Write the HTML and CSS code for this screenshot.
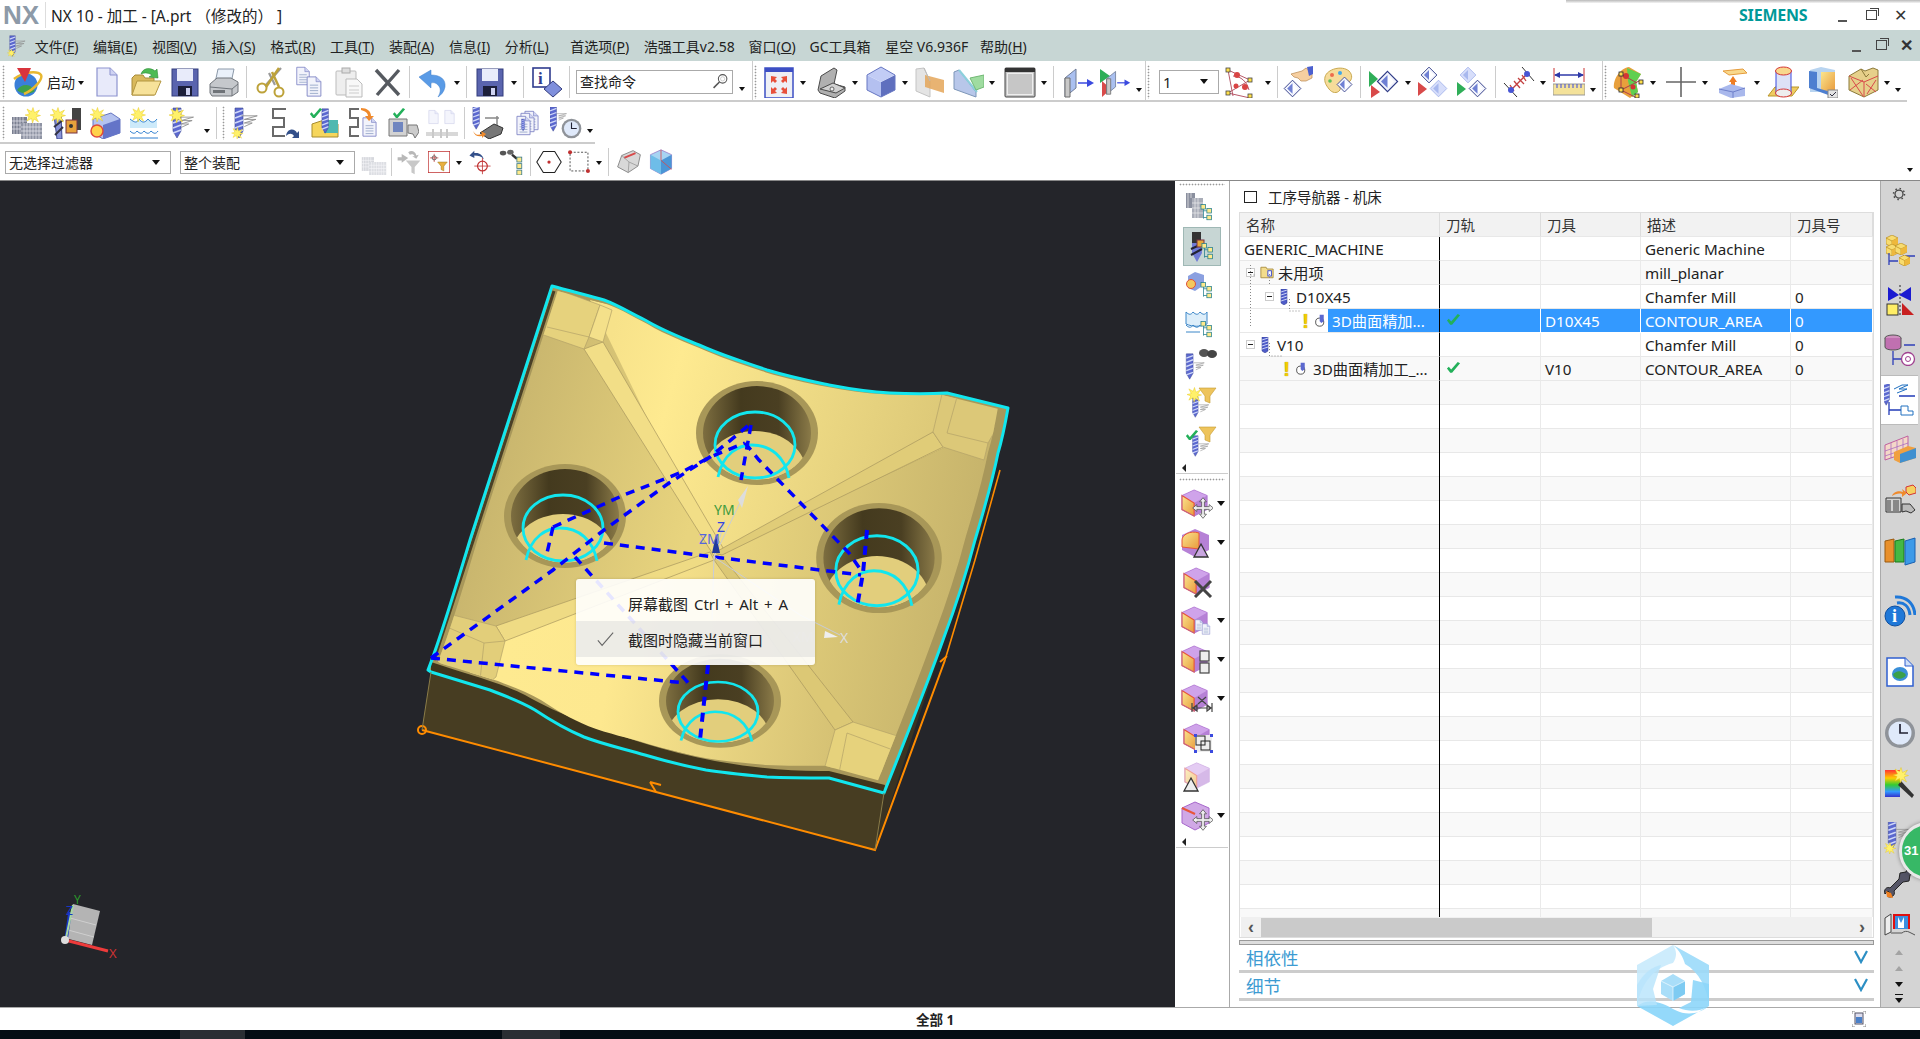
FILE: index.html
```html
<!DOCTYPE html>
<html lang="zh"><head><meta charset="utf-8"><title>NX 10</title><link rel="stylesheet" href="styles.css"></head>
<body>
<svg class="defs" aria-hidden="true"><defs>
<linearGradient id="gB" x1="0" y1="0" x2="1" y2="1"><stop offset="0" stop-color="#d5dbf7"/><stop offset="1" stop-color="#6d7fd6"/></linearGradient>
<linearGradient id="gG" x1="0" y1="0" x2="1" y2="1"><stop offset="0" stop-color="#fbe58e"/><stop offset="1" stop-color="#e89a3c"/></linearGradient>
<linearGradient id="gR" x1="0" y1="0" x2="0" y2="1"><stop offset="0" stop-color="#f33"/><stop offset=".3" stop-color="#fc0"/><stop offset=".55" stop-color="#3c3"/><stop offset=".8" stop-color="#39f"/><stop offset="1" stop-color="#33c"/></linearGradient>
<symbol id="mill" viewBox="0 0 32 32"><path d="M11 1h8v23l-4 7-4-7z" fill="#5b68cf" stroke="#3c478f" stroke-width=".6"/><path d="M11 6l8-3M11 11l8-3M11 16l8-3M11 21l8-3M11 26l8-3" stroke="#cfd7f8" stroke-width="1.6"/></symbol>
<symbol id="tool" viewBox="0 0 8 16"><path d="M1 0h6v14l-3 2-3-2z" fill="#4f5cc8" stroke="#2f3a8f" stroke-width=".5"/><path d="M1 3l6-2M1 6l6-2M1 9l6-2M1 12l6-2" stroke="#d5dcf9" stroke-width=".9"/></symbol>
<symbol id="flat" viewBox="0 0 32 32"><path d="M2 6h22L6 11h16L6 16h11L6 21" fill="none" stroke="#8b8b8b" stroke-width="1.2"/></symbol>
<symbol id="star" viewBox="0 0 32 32"><path d="M16 1l3 10 10-5-6 9 8 2-9 3 5 10-9-6-3 8-2-9-9 5 4-9-8-3 9-2-5-10 9 5z" fill="#fff16a" stroke="#e3c100" stroke-width=".8"/></symbol>
<symbol id="tybox" viewBox="0 0 32 32"><path d="M8 4v22M8 12h6M8 24h6" fill="none" stroke="#1a7a8a" stroke-width="1.3"/><g fill="#ffe98a" stroke="#1a7a8a" stroke-width="1.3"><rect x="3.500" y="1" width="8" height="8"/><rect x="14" y="8" width="8" height="8"/><rect x="14" y="20" width="8" height="8"/></g></symbol>
<symbol id="doc" viewBox="0 0 32 32"><path d="M6 2h13l7 7v21H6z" fill="#e8eafa" stroke="#8d93cf" stroke-width="1.2"/><path d="M19 2v7h7" fill="#cfd3f2" stroke="#8d93cf"/></symbol>
<symbol id="docl" viewBox="0 0 32 32"><path d="M6 2h13l7 7v21H6z" fill="#f2f3fb" stroke="#7d83c4" stroke-width="1.3"/><path d="M19 2v7h7" fill="#cfd3f2" stroke="#7d83c4"/><path d="M10 14h12M10 18h12M10 22h12M10 26h12" stroke="#7a90b8"/></symbol>
<symbol id="open" viewBox="0 0 32 32"><path d="M2 29V12l3-3h8l2 3h9v17z" fill="#d9b95c" stroke="#a88b3a"/><path d="M2 29l5-14h24l-6 14z" fill="#f7e29a" stroke="#b39640"/><path d="M11 8c2-6 9-7 14-3l2-2 1 9-9-1 3-2c-3-2-7-3-11-1z" fill="#4dbb54" stroke="#2d8c38" stroke-width=".6"/></symbol>
<symbol id="save" viewBox="0 0 32 32"><rect x="3" y="3" width="26" height="27" fill="#5a64ae" stroke="#333c7c"/><rect x="8" y="3" width="16" height="12" fill="#e8ebfa"/><rect x="9" y="20" width="14" height="10" fill="#1c1f3a"/><rect x="17" y="22" width="4" height="7" fill="#cfd3f2"/></symbol>
<symbol id="print" viewBox="0 0 32 32"><path d="M10 3h16l-3 14H7z" fill="#eaf1fa" stroke="#8b98a8"/><path d="M2 18l7-6h14l7 4v10l-6 4H4l-2-3z" fill="#c5c8cc" stroke="#70757b"/><path d="M2 21l22 2 6-5M24 23v7" fill="none" stroke="#70757b"/><path d="M5 24h12v3H5z" fill="#6f7378"/></symbol>
<symbol id="cut" viewBox="0 0 32 32"><path d="M27 2L11 20M15 7l6 12" stroke="#9a9a9a" stroke-width="2.2" fill="none"/><path d="M25 2L12 21" stroke="#bda23a" stroke-width="2.5"/><path d="M18 6l7 15" stroke="#bda23a" stroke-width="2.5"/><circle cx="8" cy="22" r="4.500" fill="none" stroke="#bda23a" stroke-width="2"/><circle cx="25" cy="26" r="4.500" fill="none" stroke="#bda23a" stroke-width="2"/></symbol>
<symbol id="copy" viewBox="0 0 32 32"><use href="#docl" x="0" y="-1" width="20" height="22"/><use href="#docl" x="10" y="9" width="22" height="23"/></symbol>
<symbol id="paste" viewBox="0 0 32 32"><rect x="4" y="5" width="20" height="24" rx="1" fill="#eee" stroke="#bbb"/><rect x="10" y="2" width="8" height="5" fill="#ddd" stroke="#aaa"/><path d="M14 13h11l5 5v13H14z" fill="#f8f8f8" stroke="#bbb"/><path d="M17 20h10M17 24h10M17 27h10" stroke="#ccc"/></symbol>
<symbol id="x" viewBox="0 0 32 32"><path d="M5 4l23 25M28 4L6 29" stroke="#565a60" stroke-width="3.400" fill="none"/></symbol>
<symbol id="undo" viewBox="0 0 32 32"><path d="M2 11l12-7v5c9 0 15 4 14 12-1 5-4 8-7 10 3-5 3-9 0-12-2-2-4-3-7-2v5z" fill="#5a9be6" stroke="#3e7fcb" stroke-width=".5"/></symbol>
<symbol id="info" viewBox="0 0 32 32"><rect x="2" y="2" width="17" height="19" fill="#fff" stroke="#2f3b8e" stroke-width="1.6"/><text x="7" y="18" class="svi">i</text><path d="M13 23l9-8 9 8-9 8z" fill="#7f8fdc" stroke="#333c7c"/></symbol>
<symbol id="mag" viewBox="0 0 32 32"><circle cx="20" cy="11" r="8" fill="#fff" stroke="#555" stroke-width="2"/><circle cx="20" cy="11" r="4" fill="none" stroke="#aaa"/><path d="M14 17L3 28" stroke="#555" stroke-width="3"/></symbol>
<symbol id="fit" viewBox="0 0 32 32"><rect x="2" y="2" width="28" height="30" fill="#eef0f5" stroke="#3d4fc4" stroke-width="1.500"/><rect x="2" y="2" width="28" height="4" fill="#3d4fc4"/><path d="M8 10l6 1-2 2 2 2-2 2-2-2-2 2zM24 10l-6 1 2 2-2 2 2 2 2-2 2 2zM8 28l6-1-2-2 2-2-2-2-2 2-2-2zM24 28l-6-1 2-2-2-2 2-2 2 2 2-2z" fill="#e8503a"/></symbol>
<symbol id="sheet" viewBox="0 0 32 32"><path d="M3 24l3-14L19 2l3 2-3 14 11 3v4l-10 7-15-5z" fill="#b0b0b0" stroke="#4a4a4a"/><path d="M5 23l13-6 12 5-9 5z" fill="#d0d0d0" stroke="#4a4a4a"/><circle cx="17" cy="23" r="2" fill="#ececec" stroke="#4a4a4a" stroke-width=".8"/></symbol>
<symbol id="cube" viewBox="0 0 32 32"><path d="M2 9l14 7v15L2 24z" fill="#b4c0f0"/><path d="M30 9l-14 7v15l14-7z" fill="#5f6fbe"/><path d="M16 1l14 8-14 7L2 9z" fill="#c2ccf5"/><path d="M16 1l14 8v15l-14 7-14-7V9z" fill="none" stroke="#6676c2"/></symbol>
<symbol id="sect" viewBox="0 0 32 32"><path d="M3 3l8-1 6 13v16L3 25z" fill="#e4e4e4" stroke="#c4c4c4"/><path d="M12 9l19 5v13l-19-6z" fill="#e4a659" opacity=".85"/><path d="M11 2l6 13" stroke="#bbb"/></symbol>
<symbol id="clip" viewBox="0 0 32 32"><path d="M2 6l5-2 17 22v5L2 23z" fill="#b8c7ea" stroke="#7d96b8"/><path d="M7 4l18 22" stroke="#8cd0dc" stroke-width="2"/><path d="M18 12l14-3v12l-8 3z" fill="#9fdca0" stroke="#70b874"/></symbol>
<symbol id="gsq" viewBox="0 0 32 32"><rect x="1" y="2" width="30" height="29" rx="1" fill="#c6c6c6" stroke="#444"/><rect x="1" y="2" width="30" height="4" fill="#333"/><rect x="3.500" y="7.500" width="25" height="21" fill="none" stroke="#eee"/></symbol>
<symbol id="plane" viewBox="0 0 32 32"><path d="M2 12l11-9v19L2 31z" fill="#aac0f0" stroke="#6f7c98"/><path d="M2 12v19h5V12z" fill="#c8c8c8" stroke="#6f6f6f"/><path d="M15 17h11" stroke="#3b4adf" stroke-width="1.500"/><path d="M24 13l7 4-7 4z" fill="#3b4adf"/></symbol>
<symbol id="plane2" viewBox="0 0 32 32"><path d="M1 3l10 7L1 17z" fill="#2fae58"/><path d="M3 15l9 8-9 8z" fill="#d84a4a"/><use href="#plane" x="6" y="0" width="26" height="32"/></symbol>
<symbol id="net" viewBox="0 0 32 32"><path d="M5 4l5 26M5 27l22 5M5 27l22-13M5 4l22 10M10 10c8 0 14 6 16 14" fill="none" stroke="#b8596a"/><g fill="#d94444"><circle cx="14" cy="9" r="3"/><circle cx="22" cy="21" r="3"/><circle cx="13" cy="20" r="2.500"/></g><g fill="#ffe04a" stroke="#444" stroke-width=".8"><rect x="3" y="2" width="4" height="4"/><rect x="3" y="25" width="4" height="4"/><rect x="25" y="12" width="4" height="4"/><rect x="25" y="28" width="4" height="4"/></g></symbol>
<symbol id="dia" viewBox="0 0 32 32"><path d="M16 2l14 14-14 14L2 16z" fill="#f2f4fd" stroke="#2e3a86" stroke-width="1.600"/><path d="M16 7l9 9-9 9z" fill="#fff"/><path d="M16 7v18l-9-9z" fill="#6f80d4"/></symbol>
<symbol id="diaf" viewBox="0 0 32 32"><path d="M16 2l14 14-14 14L2 16z" fill="#d7defa" stroke="#9fb0ea" stroke-width="1.400"/><path d="M16 7v18l-9-9z" fill="#a8b8ee"/></symbol>
<symbol id="hand" viewBox="0 0 32 32"><use href="#dia" x="0" y="13" width="19" height="19"/><path d="M8 8l11-3 4-3 6 4v6l-6 3h-5l-3-3-4-1z" fill="#f6cfa0" stroke="#b88850" stroke-width=".7"/><path d="M24 1l6-1v8l-4 2z" fill="#4c60cf"/></symbol>
<symbol id="pal" viewBox="0 0 32 32"><path d="M3 11C5 3 20-1 27 5c4 4 3 9 0 11-4 2-7-1-9 2-1 2 1 4 0 6-3 4-8 3-11-1-3-4-5-7-4-12z" fill="#f6dc9a" stroke="#c9a950"/><circle cx="10" cy="9" r="2" fill="#ee6c4c"/><circle cx="18" cy="7" r="2" fill="#3fa8e8"/><circle cx="8" cy="15" r="1.800" fill="#5cc05c"/><use href="#dia" x="14" y="10" width="17" height="17"/></symbol>
<symbol id="dia2" viewBox="0 0 32 32"><path d="M1 5l9 8-9 8z" fill="#2fae58"/><path d="M3 19l9 7-9 6z" fill="#d84a4a"/><use href="#dia" x="8" y="4" width="23" height="23"/></symbol>
<symbol id="dia3" viewBox="0 0 32 32"><use href="#dia" x="2" y="0" width="18" height="18"/><path d="M0 16l9 7-9 7z" fill="#d84a4a"/><use href="#diaf" x="11" y="13" width="19" height="19"/></symbol>
<symbol id="dia4" viewBox="0 0 32 32"><use href="#diaf" x="2" y="0" width="18" height="18"/><path d="M0 16l9 7-9 7z" fill="#2fae58"/><use href="#dia" x="11" y="13" width="19" height="19"/></symbol>
<symbol id="ant" viewBox="0 0 32 32"><path d="M8 24L24 8M11 15l6 7M15 12l6 6M19 9l4 6M7 19l4 6" stroke="#c34040" fill="none" stroke-width="1.300"/><path d="M19 1l12 14M1 17l13 14" stroke="#333"/><circle cx="24" cy="8" r="3" fill="#4755d5"/><circle cx="8" cy="24" r="3" fill="#4755d5"/></symbol>
<symbol id="ruler" viewBox="0 0 32 32"><path d="M1 2v14M31 2v14" stroke="#c33"/><path d="M2 9h28" stroke="#2e39a8" stroke-width="1.500"/><path d="M1 9l6-3v6zM31 9l-6-3v6z" fill="#2e39a8"/><rect x="0" y="18" width="32" height="11" fill="#f4e29a" stroke="#999"/><path d="M4 18v4M8 18v4M12 18v4M16 18v4M20 18v4M24 18v4M28 18v4" stroke="#3b4adf"/></symbol>
<symbol id="surf" viewBox="0 0 32 32"><path d="M1 22C0 12 8 2 16 1l12 7-5 8 2 10-8 6z" fill="#e8a03c"/><path d="M14 2l14 6-5 8 2 10-6 5-4-16z" fill="#60cf50"/><path d="M8 8v16l16 8M8 24l18-9M8 8l16 9" fill="none" stroke="#b03c4c"/><circle cx="13" cy="10" r="3" fill="#d43434"/><circle cx="20" cy="21" r="2.500" fill="#d43434"/><g fill="#ffe04a" stroke="#223" stroke-width=".8"><rect x="6" y="6" width="4" height="4"/><rect x="6" y="22" width="4" height="4"/><rect x="26" y="14" width="4" height="4"/><rect x="22" y="28" width="4" height="4"/></g></symbol>
<symbol id="cross" viewBox="0 0 32 32"><path d="M1 16h30M16 1v30" stroke="#666" stroke-width="1.600"/></symbol>
<symbol id="lift" viewBox="0 0 32 32"><path d="M6 5l20-2 4 4-18 2z" fill="#f8d88c" stroke="#e59c3c"/><path d="M16 10l4 6h-2v6h-4v-6h-2z" fill="#ee7e24"/><path d="M2 23l12-5 14 4v8l-14 2-12-5z" fill="#a9b8ec"/><path d="M2 23l14 3 12-4M16 26v6" fill="none" stroke="#6f80ca"/></symbol>
<symbol id="cyl" viewBox="0 0 32 32"><path d="M1 30l7-9h24l-7 9z" fill="#f0cc60" stroke="#b9962c"/><rect x="9" y="5" width="15" height="23" fill="#dde2f6" stroke="#3b4adf"/><ellipse cx="16.500" cy="5" rx="8" ry="4" fill="#f8d88c" stroke="#d43434"/><ellipse cx="16.500" cy="27" rx="8" ry="4" fill="#eee" stroke="#d43434"/></symbol>
<symbol id="box2" viewBox="0 0 32 32"><path d="M4 4l11-3 14 3v22H4z" fill="#b8d4f0"/><path d="M15 6h14v20H15z" fill="url(#gG)"/><path d="M3 5v17l22 8V26L11 22V6z" fill="#4d7fd0"/><rect x="22" y="24" width="10" height="8" fill="#e4e4e4" stroke="#888"/><path d="M24 28l2 2 4-4" stroke="#334" fill="none"/></symbol>
<symbol id="wire" viewBox="0 0 32 32"><path d="M2 10l12-7 4 2 8-3 5 2v20l-14 7L2 24z" fill="#e6d08a" stroke="#8c7a3a"/><path d="M2 10l15 6 14-6M17 16v15M4 12l12 18M16 14L3 24M19 18l10 8M29 14l-9 14" fill="none" stroke="#d84a4a"/><path d="M14 3l5 8 3-3" fill="none" stroke="#8c7a3a"/></symbol>
<symbol id="grid" viewBox="0 0 32 32"><rect x="1" y="10" width="15" height="17" fill="#7a7f90"/><rect x="10" y="16" width="21" height="16" fill="#8f94a4"/><path d="M3 10v17M6 10v17M9 10v17M12 10v6M1 14h15M1 18h9M1 22h9M13 16v16M16 16v16M19 16v16M22 16v16M25 16v16M28 16v16M10 20h21M10 24h21M10 28h21" stroke="#e8e8f0" stroke-width=".7"/></symbol>
<symbol id="grids" viewBox="0 0 32 32"><use href="#grid"/><use href="#star" x="14" y="0" width="16" height="16"/></symbol>
<symbol id="mh" viewBox="0 0 32 32"><rect x="22" y="1" width="9" height="22" fill="#444"/><rect x="16" y="13" width="11" height="13" fill="#e8a23c" stroke="#734"/><circle cx="21" cy="19" r="2" fill="#333"/><path d="M4 8l7 0 1 24H7z" fill="#8a94d8" stroke="#3c478f"/><path d="M4 20l9-7M5 28l8-8" stroke="#334" stroke-width="2"/><use href="#star" x="0" y="0" width="16" height="16"/></symbol>
<symbol id="bxs" viewBox="0 0 32 32"><path d="M4 12l18-6 9 6v14l-17 6-10-6z" fill="#b4c2ef" stroke="#6676c2"/><path d="M14 18l17-6v14l-17 6z" fill="#6474c8"/><circle cx="8" cy="24" r="6" fill="#ffd24a" stroke="#e04a3a" stroke-width="1.500"/><use href="#star" x="1" y="0" width="15" height="15"/></symbol>
<symbol id="wav" viewBox="0 0 32 32"><path d="M2 12c5 4 7 4 9 0 3 4 6 4 9 0 3 4 6 4 9 0v9H2z" fill="#cdeafa"/><path d="M2 12c5 4 7 4 9 0 3 4 6 4 9 0 3 4 6 4 9 0" fill="none" stroke="#2f7fd0"/><path d="M2 24c3 3 5 3 7 0 3 3 5 3 7 0 3 3 5 3 7 0 3 3 5 3 7 0M2 31h28" fill="none" stroke="#2f7fd0"/><use href="#star" x="3" y="0" width="15" height="15"/></symbol>
<symbol id="mst" viewBox="0 0 32 32"><use href="#mill" x="-5"/><use href="#flat" x="10" y="5" width="22" height="24"/><use href="#star" x="2" y="0" width="16" height="16"/></symbol>
<symbol id="mfl" viewBox="0 0 32 32"><use href="#mill" x="-7" y="0"/><use href="#flat" x="9" y="4" width="23" height="24"/><use href="#star" x="0" y="20" width="13" height="12"/></symbol>
<symbol id="sp" viewBox="0 0 32 32"><path d="M16 2H3v9h11v9H3v9h12" fill="none" stroke="#6a6a6a" stroke-width="2"/></symbol>
<symbol id="spa" viewBox="0 0 32 32"><use href="#sp"/><path d="M16 29c1-8 9-8 11-3l2-2v7h-7l2-2c-2-3-5-3-8 0z" fill="#33508a"/></symbol>
<symbol id="ck" viewBox="0 0 32 32"><path d="M2 16l4-4 5 6L25 2l5 3-17 20h-4z" fill="#23b05a"/></symbol>
<symbol id="ckb" viewBox="0 0 32 32"><path d="M3 17l12-4 14 4v13H3z" fill="#f6d65c" stroke="#a78c2e"/><path d="M15 13h14v13H15z" fill="#4fb8b0"/><use href="#mill" x="3" y="1" width="28" height="26"/><use href="#ck" x="0" y="0" width="14" height="14"/></symbol>
<symbol id="spd" viewBox="0 0 32 32"><path d="M11 2H2v9h8v9H2v9h9" fill="none" stroke="#6a6a6a" stroke-width="2"/><use href="#docl" x="11" y="8" width="21" height="24"/><path d="M13 1c6 0 10 3 10 8h3l-5 5-4-5h3c0-3-3-5-7-6z" fill="#f08a2c"/></symbol>
<symbol id="mach" viewBox="0 0 32 32"><path d="M2 12h18v17H2z" fill="#d2d2d2" stroke="#777"/><rect x="6" y="15" width="10" height="10" fill="#7086c0"/><path d="M21 18h9l2 7-4 6-2-4-5-1z" fill="#ccc" stroke="#777"/></symbol>
<symbol id="ckm" viewBox="0 0 32 32"><use href="#mach"/><use href="#ck" x="5" y="0" width="14" height="14"/></symbol>
<symbol id="fad" viewBox="0 0 32 32" opacity=".45"><use href="#doc" x="0" y="0" width="15" height="20"/><use href="#doc" x="16" y="0" width="15" height="20"/><path d="M0 27h32" stroke="#aaa" stroke-width="4"/><path d="M7 22v9M15 22v9M21 22v9" stroke="#888" stroke-width="2"/></symbol>
<symbol id="mm" viewBox="0 0 32 32"><use href="#mill" x="-8" y="-3" width="26" height="26"/><path d="M13 11h14M25 9v9" stroke="#888" stroke-width="1.500"/><path d="M8 26l14-9 9 4-2 6-12 5z" fill="#777" stroke="#333"/><path d="M1 24c3 5 6 4 9 3l-1-3 5 3-4 4v-2c-4 1-7 0-9-5z" fill="#ef8a2c"/></symbol>
<symbol id="dmi" viewBox="0 0 32 32"><use href="#docl" x="10" y="0" width="21" height="27"/><use href="#docl" x="6" y="2" width="21" height="27"/><use href="#docl" x="2" y="5" width="21" height="27"/><use href="#mill" x="6" y="11" width="13" height="14"/></symbol>
<symbol id="clock" viewBox="0 0 32 32"><circle cx="16" cy="16" r="15" fill="#8f9399"/><circle cx="16" cy="16" r="11.500" fill="#dfe9fa"/><path d="M16 7v9h8" fill="none" stroke="#223" stroke-width="1.700"/></symbol>
<symbol id="clockm" viewBox="0 0 32 32"><use href="#mill" x="-9" y="-1" width="26" height="26"/><use href="#flat" x="6" y="3" width="14" height="16"/><use href="#clock" x="11" y="11" width="21" height="21"/></symbol>
<symbol id="flt" viewBox="0 0 32 32"><path d="M12 14h18l-7 8v9l-4-2v-7z" fill="#c8c8c8"/><path d="M2 14v-4h5V6l8 5-8 6v-3z" fill="#b8b8b8"/><path d="M15 4c4-3 9-1 10 4l3-1-3 5-5-3h3c-1-3-4-3-6-2z" fill="#b8b8b8"/></symbol>
<symbol id="fbox" viewBox="0 0 32 32"><path d="M0 0h32v32H0z" fill="#fff" stroke="#c03030" stroke-width="2"/><path d="M14 16h14l-5 6v7l-4-2v-5z" fill="#e8b040" stroke="#8a6a10" stroke-width=".6"/><path d="M9 4v12M3 10h12" stroke="#c03030"/><circle cx="9" cy="10" r="3" fill="none" stroke="#333"/></symbol>
<symbol id="utg" viewBox="0 0 32 32"><circle cx="19" cy="21" r="6" fill="none" stroke="#c03030" stroke-width="1.500"/><path d="M19 11v20M9 21h20" stroke="#c03030"/><path d="M3 8l6-6v3c6-1 10 2 12 8-3-4-7-5-12-5v3z" fill="#33508a"/></symbol>
<symbol id="bin" viewBox="0 0 32 32"><ellipse cx="5" cy="5" rx="4" ry="3" fill="#555"/><ellipse cx="14" cy="4" rx="4" ry="3" fill="#666"/><path d="M16 7l6 5" stroke="#333" stroke-width="3"/><g fill="#ffe98a" stroke="#3a7a8a"><rect x="22" y="10" width="6" height="6"/><rect x="22" y="18" width="6" height="6"/><rect x="22" y="26" width="6" height="6"/></g></symbol>
<symbol id="hex" viewBox="0 0 32 32"><path d="M9 3h14l8 13-8 13H9L1 16z" fill="#fff" stroke="#222" stroke-width="1.300"/><circle cx="16" cy="16" r="2" fill="#c03030"/></symbol>
<symbol id="rct" viewBox="0 0 32 32"><rect x="5" y="4" width="22" height="23" fill="none" stroke="#333" stroke-dasharray="2.500 2"/><circle cx="5" cy="4" r="2.500" fill="#c03030"/><circle cx="27" cy="27" r="2.500" fill="#c03030"/></symbol>
<symbol id="box3" viewBox="0 0 32 32"><path d="M2 22l5-14L21 2l9 5-3 14-12 8z" fill="#d8d8d8" stroke="#777"/><path d="M10 11l14-6" stroke="#d84a4a" stroke-width="2.500"/><path d="M7 8l9 8 11 5M16 16l-1 13" stroke="#999" fill="none"/></symbol>
<symbol id="cubes" viewBox="0 0 32 32"><path d="M16 1l13 6v17l-13 7-13-7V7z" fill="#a7d4f2" stroke="#9b7fca"/><path d="M16 14L3 7v17l13 7z" fill="#6ebde8"/><path d="M16 14l13-7v17l-13 7z" fill="#4a96d6"/><path d="M16 1v13l13 11" stroke="#d84a4a" fill="none"/></symbol>
<symbol id="gridt" viewBox="0 0 32 32"><rect x="1" y="1" width="9" height="15" fill="#8a8f9e"/><rect x="7" y="6" width="11" height="20" fill="#a9adb8"/><path d="M3 1v15M6 1v5M10 6v20M13 6v20M7 11h11M7 16h11M7 21h11" stroke="#eee" stroke-width=".7"/><use href="#tybox" x="14" y="10" width="18" height="22"/></symbol>
<symbol id="millt" viewBox="0 0 32 32"><path d="M6 1h9v12H6z" fill="#333"/><path d="M6 12h9l1 10-5 9-5-9z" fill="#6f7ad6"/><path d="M5 18l11-5M5 24l11-6" stroke="#223" stroke-width="2"/><rect x="11" y="9" width="7" height="7" fill="#e6a83c" stroke="#734"/><use href="#tybox" x="14" y="10" width="18" height="22"/></symbol>
<symbol id="boxt" viewBox="0 0 32 32"><path d="M3 6l7-4 9 3v10l-9 6-7-3z" fill="#8ba0e0"/><circle cx="6" cy="14" r="4.500" fill="#f5c95c" stroke="#e0503a"/><use href="#tybox" x="14" y="10" width="18" height="22"/></symbol>
<symbol id="wavt" viewBox="0 0 32 32"><path d="M1 3c3 3 5 3 7 0 3 3 5 3 7 0 3 3 5 3 7 0v12c-7 3-14 3-21 0z" fill="#ddeefa" stroke="#3b86c8"/><path d="M1 16c3 3 5 3 7 0 3 3 5 3 7 0M1 23h14" stroke="#3b86c8" fill="none"/><use href="#tybox" x="14" y="10" width="18" height="22"/></symbol>
<symbol id="bmi" viewBox="0 0 32 32"><use href="#mill" x="-8" y="5" width="27" height="27"/><use href="#flat" x="8" y="12" width="15" height="15"/><ellipse cx="19" cy="5" rx="5" ry="4" fill="#555"/><ellipse cx="27" cy="6" rx="5" ry="4" fill="#444"/></symbol>
<symbol id="fms" viewBox="0 0 32 32"><use href="#mill" x="0" y="8" width="22" height="24"/><use href="#flat" x="12" y="15" width="16" height="15"/><path d="M14 1h17l-6 8v7l-5-2V9z" fill="#eec45c" stroke="#c49a30" stroke-width=".6"/><use href="#star" x="2" y="0" width="15" height="15"/></symbol>
<symbol id="fmc" viewBox="0 0 32 32"><use href="#mill" x="0" y="8" width="22" height="24"/><use href="#flat" x="12" y="15" width="16" height="15"/><path d="M14 1h17l-6 8v7l-5-2V9z" fill="#eec45c" stroke="#c49a30" stroke-width=".6"/><use href="#ck" x="0" y="3" width="14" height="14"/></symbol>
<symbol id="pc" viewBox="0 0 32 32"><path d="M14 2l14 6v15l-14 7L1 23V8z" fill="#b681d6"/><path d="M14 2l14 6-14 8L1 8z" fill="#cfa3ea"/><path d="M1 8l13 8v14L1 23z" fill="url(#gG)" stroke="#e8553a" stroke-width="1.200"/><path d="M14 2l14 6v15l-14 7L1 23V8z" fill="none" stroke="#a767cc" stroke-width=".6"/></symbol>
<symbol id="mvg" viewBox="0 0 32 32"><path d="M16 1l5 6h-3v7h7v-3l6 5-6 5v-3h-7v7h3l-5 6-5-6h3v-7H7v3l-6-5 6-5v3h7V7h-3z" fill="#eee" stroke="#444"/></symbol>
<symbol id="c1" viewBox="0 0 32 32"><use href="#pc" width="30" height="30"/><use href="#mvg" x="11" y="9" width="22" height="22"/></symbol>
<symbol id="c2" viewBox="0 0 32 32"><path d="M14 2l14 6v15l-14 7L1 23V8z" fill="#b681d6"/><path d="M1 13c0-5 8-10 17-7v16L1 20z" fill="url(#gG)" stroke="#e8553a"/><path d="M20 17l7 13H13z" fill="#c9a6e0" stroke="#333" stroke-width="1.300"/></symbol>
<symbol id="c3" viewBox="0 0 32 32"><use href="#pc" x="2" width="30" height="30"/><path d="M14 15l16 16M30 15L14 31" stroke="#444" stroke-width="3"/></symbol>
<symbol id="c4" viewBox="0 0 32 32"><use href="#pc" width="30" height="30"/><use href="#docl" x="12" y="12" width="12" height="16"/><use href="#docl" x="19" y="16" width="12" height="16"/></symbol>
<symbol id="c5" viewBox="0 0 32 32"><use href="#pc" width="30" height="30"/><rect x="19" y="7" width="9" height="10" fill="#eee" stroke="#444" stroke-width="1.200"/><rect x="19" y="19" width="9" height="10" fill="#eee" stroke="#444" stroke-width="1.200"/></symbol>
<symbol id="c6" viewBox="0 0 32 32"><use href="#pc" width="30" height="30"/><path d="M11 20v9M31 20v9M12 25h18M12 25l4-3v6zM30 25l-4-3v6zM17 14l8 7M25 14l-8 7" stroke="#444" stroke-width="1.200" fill="none"/></symbol>
<symbol id="c7" viewBox="0 0 32 32"><use href="#pc" x="2" width="30" height="30"/><rect x="14" y="13" width="17" height="17" fill="#eee"/><rect x="15" y="14" width="9" height="9" fill="none" stroke="#222"/><rect x="20" y="19" width="9" height="9" fill="none" stroke="#222"/><g fill="#3b4adf"><rect x="13" y="12" width="3" height="3"/><rect x="29" y="12" width="3" height="3"/><rect x="13" y="28" width="3" height="3"/><rect x="29" y="28" width="3" height="3"/></g></symbol>
<symbol id="c8" viewBox="0 0 32 32"><g opacity=".55"><use href="#pc" x="3" width="29" height="29"/></g><path d="M10 17l7 13H3z" fill="#eee" stroke="#333" stroke-width="1.300"/></symbol>
<symbol id="c9" viewBox="0 0 32 32"><path d="M14 2l14 6v15l-14 7L1 23V8z" fill="#d0a8e6" stroke="#a767cc"/><path d="M1 8l13 6" stroke="#e8553a" stroke-width="2"/><use href="#mvg" x="11" y="9" width="22" height="22"/></symbol>
<symbol id="yc" viewBox="0 0 12 12"><path d="M6 0l6 3v6l-6 3-6-3V3z" fill="#f8dc70" stroke="#b88c20" stroke-width=".7"/><path d="M0 3l6 3 6-3M6 6v6" fill="none" stroke="#b88c20" stroke-width=".7"/><path d="M6 6l6-3v6l-6 3z" fill="#eeb83c"/></symbol>
<symbol id="r1" viewBox="0 0 32 32"><use href="#yc" x="2" y="1" width="12" height="12"/><use href="#yc" x="2" y="10" width="12" height="12"/><use href="#yc" x="11" y="9" width="12" height="12"/><path d="M5 19v12M5 27h9M19 22h12" stroke="#2f3fb8" stroke-width="1.300" fill="none"/><use href="#yc" x="15" y="21" width="11" height="11"/></symbol>
<symbol id="r2" viewBox="0 0 32 32"><path d="M16 1v31" stroke="#222" stroke-dasharray="2 2"/><path d="M4 3l11 8 12-8v14l-12-6-11 6z" fill="#1a1ad0"/><rect x="3" y="20" width="11" height="11" fill="#ffee66" stroke="#333"/><path d="M18 19l12 12H18z" fill="#c82020"/></symbol>
<symbol id="r3" viewBox="0 0 32 32"><ellipse cx="9" cy="4" rx="8" ry="3" fill="#d090c0" stroke="#555"/><path d="M1 4v9c0 4 16 4 16 0V4" fill="#c070b0" stroke="#555"/><path d="M9 17v14M9 25h9M20 11h11" stroke="#2f3fb8" stroke-width="1.300" fill="none"/><circle cx="24" cy="25" r="6.500" fill="#fff" stroke="#a04090" stroke-width="1.300"/><circle cx="24" cy="25" r="2.500" fill="none" stroke="#a04090"/></symbol>
<symbol id="r4" viewBox="0 0 32 32"><use href="#mill" x="-10" y="-4" width="26" height="26"/><path d="M10 5l8-4h6l-9 4h8l-10 4" fill="none" stroke="#2070c0"/><path d="M15 12h16M5 18v13M5 26h12" stroke="#223bb8" stroke-width="1.300" fill="none"/><path d="M17 22h7v5h5v4H17z" fill="#fff" stroke="#2070c0"/></symbol>
<symbol id="r5" viewBox="0 0 32 32"><path d="M1 11L24 2v16L1 26z" fill="#f4d8c8" stroke="#c060a0"/><path d="M1 17l23-8M1 22l23-8M7 9v15M13 7v15M19 5v15" stroke="#a060c0" stroke-width=".7"/><path d="M10 18l14-6 8 2v10l-16 5-6-3z" fill="#f0a040"/><path d="M16 20l16-6v10l-16 5z" fill="#4090d0"/></symbol>
<symbol id="r6" viewBox="0 0 32 32"><path d="M2 14h15v14H2z" fill="#d2d2d2" stroke="#333"/><path d="M3 16h4v11H3zM9 16h6v11H9z" fill="#888"/><path d="M18 20h8l5 6-4 3-5-2-4 1z" fill="#bbb" stroke="#333"/><path d="M8 12c1-4 7-6 11-4l-1-3 5 4-5 4v-3c-3-1-7 0-10 2z" fill="#ef8a2c"/><path d="M22 3l7-2 3 3v5l-7 2-3-3z" fill="#f5d060" stroke="#d43434"/></symbol>
<symbol id="r7" viewBox="0 0 32 32"><path d="M1 7l9-2v23H1z" fill="#e8902c" stroke="#9a5a10"/><path d="M11 7l9-2v23h-9z" fill="#44b844" stroke="#1a7a1a"/><path d="M21 7l10-3v24l-10 3z" fill="#3d9ae8" stroke="#1a60b0"/></symbol>
<symbol id="r8" viewBox="0 0 32 32"><circle cx="11" cy="21" r="10" fill="#1f78d8" stroke="#0f4f9f"/><text x="8" y="27" class="svj">i</text><path d="M13 8c7-1 12 3 13 12M11 2c11-1 19 6 20 18" fill="none" stroke="#1f78d8" stroke-width="3"/></symbol>
<symbol id="r9" viewBox="0 0 32 32"><path d="M3 2h18l8 8v20H3z" fill="#fff" stroke="#2f5fd0" stroke-width="1.500"/><path d="M21 2v8h8" fill="#cfe0f8" stroke="#2f5fd0"/><ellipse cx="16" cy="18" rx="8" ry="7" fill="#3a8fd8"/><path d="M9 19c3-5 9-5 13 0-3 5-10 5-13 0z" fill="#3aa04a"/></symbol>
<symbol id="r10" viewBox="0 0 32 32"><path d="M1 3h15v27H1z" fill="url(#gR)"/><path d="M17 14l13 14-2 3-14-13z" fill="#333"/><use href="#star" x="9" y="0" width="16" height="16"/></symbol>
<symbol id="r11" viewBox="0 0 32 32"><use href="#mill" x="-6" y="-2" width="30" height="30"/><use href="#flat" x="10" y="4" width="20" height="18"/><use href="#star" x="0" y="20" width="12" height="12"/></symbol>
<symbol id="r12" viewBox="0 0 32 32"><path d="M23 2l5 5-2 1-1 6-6 1-9 9c2 4-3 8-7 5l3-3-2-2-3 3c-2-4 2-8 5-6l9-9 1-6 6-1z" fill="#556" stroke="#222"/><path d="M2 24l5 2 2 5-6-1z" fill="#f08020"/></symbol>
<symbol id="r13" viewBox="0 0 32 32"><path d="M1 8l6-4v18l-6 3z" fill="#eee" stroke="#444"/><path d="M9 4h17v15H9z" fill="#e01010"/><path d="M11 6h13v13H11z" fill="#3c8ee0"/><path d="M14 7l3 6 3-6v11h-6z" fill="#fff"/><path d="M7 23h11c2-2 5-2 7-1l6 3" fill="none" stroke="#555"/></symbol>
<symbol id="gear" viewBox="0 0 32 32"><circle cx="16" cy="16" r="8" fill="none" stroke="#444" stroke-width="2.500"/><circle cx="16" cy="16" r="11" fill="none" stroke="#444" stroke-width="3" stroke-dasharray="3 5.600"/></symbol>
<symbol id="start" viewBox="0 0 32 32"><circle cx="15" cy="19" r="11.500" fill="#3a7fd8"/><path d="M6 24c4 4 12 5 18 1-3-3-4-6-9-6-4 0-7 2-9 5z" fill="#3da04a"/><path d="M3 13c10-8 24-8 27-4 2 4-6 14-17 19" fill="none" stroke="#e8b830" stroke-width="2.500"/><path d="M6 2h14l-6 14z" fill="#d8343c"/></symbol>
<symbol id="fold" viewBox="0 0 16 16"><path d="M1 2h6l1 2h7v10H1z" fill="#f3dc8c" stroke="#a78c3e"/><rect x="9" y="6" width="4" height="6" fill="#fff" stroke="#2f3fd0"/></symbol>
<symbol id="oper" viewBox="0 0 16 16"><circle cx="7" cy="10" r="5" fill="#fff" stroke="#333"/><path d="M7 1h5v8l-3 2-2-2z" fill="#5b68cf"/></symbol>
</defs></svg>

<header class="title">
  <span class="nx">NX</span><span class="ttxt">NX 10 - 加工 - [A.prt （修改的） ]</span>
  <span class="siemens">SIEMENS</span>
  <span class="win"><span class="wmin"></span><span class="wmax"></span><span class="wx">✕</span></span>
  <span class="tshadow"></span>
</header>
<nav class="menu">
  <svg class="micon"><use href="#mfl"/></svg>
  <span>文件(<u>F</u>)</span><span>编辑(<u>E</u>)</span><span>视图(<u>V</u>)</span><span>插入(<u>S</u>)</span><span>格式(<u>R</u>)</span><span>工具(<u>T</u>)</span><span>装配(<u>A</u>)</span><span>信息(<u>I</u>)</span><span>分析(<u>L</u>)</span>
  <span class="mg">首选项(<u>P</u>)</span><span>浩强工具v2.58</span><span class="ms">窗口(<u>O</u>)</span><span class="ms">GC工具箱</span><span>星空 V6.936F</span><span class="ms2">帮助(<u>H</u>)</span>
  <span class="win win2"><span class="wmin"></span><span class="wmax"></span><span class="wx">✕</span></span>
</nav>

<div class="tb r1">
  <i class="grip"></i>
  <i class="i"><svg><use href="#start"/></svg></i><span class="qd">启动</span><i class="a"></i>
  <i class="i"><svg><use href="#doc"/></svg></i><i class="i"><svg><use href="#open"/></svg></i><i class="i"><svg><use href="#save"/></svg></i><i class="i"><svg><use href="#print"/></svg></i>
  <i class="sep"></i>
  <i class="i"><svg><use href="#cut"/></svg></i><i class="i"><svg><use href="#copy"/></svg></i><i class="i"><svg><use href="#paste"/></svg></i><i class="i"><svg><use href="#x"/></svg></i>
  <i class="sep"></i>
  <i class="i"><svg><use href="#undo"/></svg></i><i class="a"></i>
  <i class="sep"></i>
  <i class="i"><svg><use href="#save"/></svg></i><i class="a"></i>
  <i class="sep"></i>
  <i class="i"><svg><use href="#info"/></svg></i>
  <i class="sep"></i>
  <span class="search"><span>查找命令</span><svg class="mag"><use href="#mag"/></svg></span><i class="a al"></i>
  <i class="gsep"></i><i class="grip"></i>
  <i class="i"><svg><use href="#fit"/></svg></i><i class="a am"></i>
  <i class="i"><svg><use href="#sheet"/></svg></i><i class="a"></i>
  <i class="i"><svg><use href="#cube"/></svg></i><i class="a an"></i>
  <i class="i"><svg><use href="#sect"/></svg></i><i class="i"><svg><use href="#clip"/></svg></i><i class="a am"></i>
  <i class="i"><svg><use href="#gsq"/></svg></i><i class="a"></i>
  <i class="sep sw"></i>
  <i class="i"><svg><use href="#plane"/></svg></i><i class="i ov"><svg><use href="#plane2"/></svg></i><i class="a al2"></i>
  <i class="gsep"></i><i class="grip"></i>
  <span class="combo cn"><span>1</span><i class="da"></i></span>
  <i class="i"><svg><use href="#net"/></svg></i><i class="a aw"></i>
  <i class="sep0"></i>
  <i class="i"><svg><use href="#hand"/></svg></i><i class="i"><svg><use href="#pal"/></svg></i>
  <i class="sep"></i>
  <i class="i"><svg><use href="#dia2"/></svg></i><i class="a"></i>
  <i class="i"><svg><use href="#dia3"/></svg></i><i class="i"><svg><use href="#dia4"/></svg></i>
  <i class="sep"></i>
  <i class="i"><svg><use href="#ant"/></svg></i><i class="a"></i>
  <i class="i"><svg><use href="#ruler"/></svg></i><i class="a al2"></i>
  <i class="gsep0"></i><i class="grip"></i>
  <i class="i"><svg><use href="#surf"/></svg></i><i class="a am"></i>
  <i class="i"><svg><use href="#cross"/></svg></i><i class="a am"></i>
  <i class="i"><svg><use href="#lift"/></svg></i><i class="a"></i>
  <i class="i"><svg><use href="#cyl"/></svg></i><i class="i"><svg><use href="#box2"/></svg></i><i class="i w2"><svg><use href="#wire"/></svg></i><i class="a"></i><i class="a al2"></i>
</div>

<div class="tb r2">
  <i class="grip"></i>
  <i class="i"><svg><use href="#grids"/></svg></i><i class="i"><svg><use href="#mh"/></svg></i><i class="i"><svg><use href="#bxs"/></svg></i><i class="i"><svg><use href="#wav"/></svg></i><i class="i"><svg><use href="#mst"/></svg></i><i class="a al2"></i>
  <i class="sep"></i><i class="grip"></i>
  <i class="i"><svg><use href="#mfl"/></svg></i><i class="i"><svg><use href="#spa"/></svg></i><i class="i"><svg><use href="#ckb"/></svg></i><i class="i"><svg><use href="#spd"/></svg></i><i class="i"><svg><use href="#ckm"/></svg></i><i class="i"><svg><use href="#fad"/></svg></i>
  <i class="sep"></i>
  <i class="i"><svg><use href="#mm"/></svg></i><i class="i"><svg><use href="#dmi"/></svg></i><i class="i"><svg><use href="#clockm"/></svg></i><i class="a al2"></i>
</div>

<div class="tb r3">
  <span class="combo c1"><span>无选择过滤器</span><i class="da"></i></span>
  <span class="combo c2"><span>整个装配</span><i class="da"></i></span>
  <i class="j fade"><svg><use href="#grid"/></svg></i>
  <i class="sep"></i>
  <i class="j"><svg><use href="#flt"/></svg></i><i class="j"><svg class="red"><use href="#fbox"/></svg></i><i class="a"></i>
  <i class="j"><svg><use href="#utg"/></svg></i><i class="j w2"><svg><use href="#bin"/></svg></i>
  <i class="sep s4"></i>
  <i class="j"><svg><use href="#hex"/></svg></i><i class="j"><svg><use href="#rct"/></svg></i><i class="a"></i>
  <i class="sep s4"></i>
  <i class="j w2"><svg><use href="#box3"/></svg></i><i class="j w2"><svg><use href="#cubes"/></svg></i>
  <i class="corner"></i>
</div>

<main class="work">
  <section class="view">
    <svg class="scene" viewBox="0 181 1175 826">
      <defs>
        <path id="top" d="M552,286 C570,291 590,296 604,300 C620,306 630,313 645,320 C665,332 685,339 706,348 C727,357 747,363 767,370 C790,377 810,381 829,385 C850,389 870,392 890,393 C910,394 930,394 947,393 L1008,408 C1005,425 1002,440 998,453 C992,483 984,510 975,540 C966,575 955,608 943,640 C925,690 905,740 884,793 L829,778 C810,778 790,778 767,777 C746,775 725,773 706,770 C685,766 665,761 645,755 C625,749 605,745 584,737 C565,729 550,720 535,710 C520,701 505,696 490,690 L431,672 L428,670 C440,640 455,590 470,540 Z"/>
        <clipPath id="inner"><use href="#top" transform="translate(715 541) scale(.965) translate(-715 -545)"/></clipPath>
        <linearGradient id="sT" gradientUnits="userSpaceOnUse" x1="610" y1="340" x2="960" y2="440"><stop offset="0" stop-color="#f7e28a"/><stop offset=".2" stop-color="#feea90"/><stop offset="1" stop-color="#dac676"/></linearGradient>
        <linearGradient id="sL" gradientUnits="userSpaceOnUse" x1="470" y1="500" x2="680" y2="560"><stop offset="0" stop-color="#c7b46d"/><stop offset="1" stop-color="#e8d47e"/></linearGradient>
        <linearGradient id="sR" gradientUnits="userSpaceOnUse" x1="740" y1="560" x2="970" y2="600"><stop offset="0" stop-color="#e8d47e"/><stop offset="1" stop-color="#c6b36b"/></linearGradient>
        <linearGradient id="sB" gradientUnits="userSpaceOnUse" x1="500" y1="680" x2="850" y2="740"><stop offset="0" stop-color="#feea90"/><stop offset=".3" stop-color="#fde88f"/><stop offset="1" stop-color="#d3bf72"/></linearGradient>
        <linearGradient id="dk" x1="0" x2="1"><stop offset="0" stop-color="#7d6e40"/><stop offset=".35" stop-color="#443a1e"/><stop offset=".7" stop-color="#4a3f22"/><stop offset="1" stop-color="#8a7a48"/></linearGradient>
        <clipPath id="hc"><ellipse cx="0" cy="0" rx="54" ry="47"/></clipPath>
        <g id="hole">
          <ellipse rx="61" ry="52" fill="#a89758"/>
          <ellipse rx="54" ry="47" fill="url(#dk)"/>
          <ellipse cx="-2" cy="42" rx="52" ry="44" fill="#e2ce7c" clip-path="url(#hc)"/>
          <g fill="none" stroke="#12e6ee" stroke-width="2.800">
            <ellipse cx="-2" cy="12" rx="40" ry="33"/>
            <path d="M-39,44 C-34,20 -18,12 -5,12 C14,12 28,24 32,45"/>
          </g>
        </g>
      </defs>
      <path d="M431,672 L884,793 L875,850 L422,730 Z" fill="#473d22"/>
      <path d="M884,793 L1000,470 L875,850 Z" fill="#3a3322"/>
      <use href="#top" fill="#a8975a"/>
      <path d="M431,672 L490,690 C505,696 520,701 535,710 C550,720 565,729 584,737 C605,745 625,749 645,755 C665,761 685,766 706,770 C725,773 746,775 767,777 C790,778 810,778 829,778 L884,793 L885,785 L829,771 C780,772 720,765 660,748 C600,730 560,715 525,695 C505,684 460,672 431,662 Z" fill="#3f351c"/>
      <path d="M554,291 L473,541 L434,660" fill="none" stroke="#4a4026" stroke-width="3"/>
      <g clip-path="url(#inner)">
        <path d="M540,280 L620,320 L714,556 L480,640 L420,690 Z" fill="url(#sL)"/>
        <path d="M590,300 L960,385 L950,445 L714,556 Z" fill="url(#sT)"/>
        <path d="M950,445 L1010,420 L890,780 L835,730 L714,556 Z" fill="url(#sR)"/>
        <path d="M470,640 L714,556 L840,730 L830,790 L470,700 Z" fill="url(#sB)"/>
        <path d="M584,349 L603,342 L726,553 L714,556 Z" fill="#f2de87" stroke="#a8975e" stroke-width=".7"/>
        <path d="M933,432 L943,447 L722,555 L714,553 Z" fill="#e0cc78" stroke="#a8975e" stroke-width=".7"/>
        <path d="M496,626 L505,641 L714,560 L710,552 Z" fill="#efdb84" stroke="#a8975e" stroke-width=".7"/>
        <path d="M853,722 L835,730 L714,560 L722,556 Z" fill="#dcc875" stroke="#a8975e" stroke-width=".7"/>
        <path d="M545,285 L600,305 L589,337 L584,349 L535,332 Z" fill="#e6d27d" stroke="#b3a268" stroke-width=".7"/>
        <path d="M600,305 L612,310 L603,342 L589,337 Z" fill="#f4e08a" stroke="#b3a268" stroke-width=".7"/>
        <path d="M547,327 L589,337" stroke="#b3a268" stroke-width=".7"/>
        <path d="M943,390 L1010,405 L988,443 L984,460 L943,447 L933,432 Z" fill="#dcc878" stroke="#b3a268" stroke-width=".7"/>
        <path d="M957,397 L947,433 L988,443" fill="none" stroke="#b3a268" stroke-width=".7"/>
        <path d="M453,615 L496,626 L505,641 L496,677 L480,690 L420,670 Z" fill="#e2ce7a" stroke="#b3a268" stroke-width=".7"/>
        <path d="M447,627 L484,643 L480,680 M484,643 L505,641" fill="none" stroke="#b3a268" stroke-width=".7"/>
        <path d="M853,722 L910,740 L890,800 L824,770 L835,730 Z" fill="#e6d27c" stroke="#b3a268" stroke-width=".7"/>
        <path d="M847,733 L839,773 M847,733 L893,750" fill="none" stroke="#b3a268" stroke-width=".7"/>
      </g>
      <use href="#hole" transform="translate(757 433)"/>
      <use href="#hole" transform="translate(565 516)"/>
      <use href="#hole" transform="translate(879 558) scale(1.030 1.060)"/>
      <use href="#hole" transform="translate(720 701) scale(1 .9)"/>
      <use href="#top" fill="none" stroke="#12e6ee" stroke-width="3" stroke-linejoin="round"/>
      <g fill="none" stroke="#ff8c00" stroke-width="2">
        <path d="M422,730 L875,850 L945,660"/>
        <path d="M945,660 L975,560 L1000,470" stroke-width="1.600"/>
        <circle cx="422" cy="730" r="4"/>
        <path d="M650,782 L656,792 M650,782 L661,785 M940,662 L947,656"/>
      </g>
      <path d="M431,672 L422,730 M884,793 L875,850" stroke="#8a7c48" fill="none"/>
      <g fill="none" stroke="#0000ff" stroke-width="3.500" stroke-dasharray="9 7">
        <path d="M431,658 L553,570 L604,530 L669,483 L710,457 L749,425"/>
        <path d="M553,527 L624,495 L682,472 L710,457 L745,443"/>
        <path d="M745,443 L759,460 L849,553 L863,573"/>
        <path d="M604,543 L714,557 L861,575"/>
        <path d="M431,658 L686,683"/>
        <path d="M575,557 L692,687"/>
        <path d="M708,665 L700,740" stroke-width="4"/>
        <path d="M751,425 L741,480"/>
        <path d="M553,527 L547,553"/>
        <path d="M867,530 L863,573 L857,607" stroke-width="4"/>
      </g>
      <g fill="none" stroke="#c8ccd8" stroke-width="1">
        <path d="M714,557 L746,490 M714,557 L725,520 M714,557 L800,615 L840,635 M714,557 L712,620"/>
      </g>
      <path d="M742,508 L748,486 L738,500 Z" fill="#ddd"/>
      <path d="M712,553 L716,535 L720,553 Z" fill="#223a9c"/>
      <path d="M825,631 L838,637 L824,638 Z" fill="#eee"/>
      <text x="714" y="515" class="scn-ym">YM</text>
      <text x="717" y="532" class="scn-z">Z</text>
      <text x="699" y="544" class="scn-zm">ZM</text>
      <text x="793" y="642" class="scn-xm">XM</text>
      <text x="840" y="643" class="scn-x">X</text>
      <g>
        <path d="M73,904 L100,911 L92,945 L65,938 Z" fill="#b4b4b4"/>
        <path d="M70,918 L96,925 M68,930 L94,937" stroke="#cfcfcf"/>
        <path d="M70,912 L66,940" stroke="#1636c8" stroke-width="3.500"/>
        <path d="M66,938 L73,905" stroke="#a8d8a0" stroke-width="2"/>
        <path d="M65,940 L108,951" stroke="#ee3b3b" stroke-width="3"/>
        <circle cx="65" cy="940" r="4" fill="#ddd"/>
        <text x="74" y="904" class="scn-ty">Y</text>
        <text x="66" y="915" class="scn-tz">Z</text>
        <text x="109" y="958" class="scn-tx">X</text>
      </g>
    </svg>
    <div class="popup">
      <div class="pi pw">屏幕截图 Ctrl + Alt + A</div>
      <div class="pi on"><svg class="chk" viewBox="0 0 20 20"><path d="M1 11l5 6L19 2" fill="none" stroke="#666" stroke-width="1.300"/></svg>截图时隐藏当前窗口</div>
    </div>
  </section>

  <aside class="strip">
    <i class="vgrip"></i>
    <i class="v t"><svg><use href="#gridt"/></svg></i>
    <i class="v t sel"><svg><use href="#millt"/></svg></i>
    <i class="v t"><svg><use href="#boxt"/></svg></i>
    <i class="v t"><svg><use href="#wavt"/></svg></i>
    <i class="v t"><svg><use href="#bmi"/></svg></i>
    <i class="v t"><svg><use href="#fms"/></svg></i>
    <i class="v t"><svg><use href="#fmc"/></svg></i>
    <i class="chev"></i>
    <i class="vgrip g2"></i>
    <i class="v"><svg><use href="#c1"/></svg><i class="da"></i></i>
    <i class="v"><svg><use href="#c2"/></svg><i class="da"></i></i>
    <i class="v"><svg><use href="#c3"/></svg></i>
    <i class="v"><svg><use href="#c4"/></svg><i class="da"></i></i>
    <i class="v"><svg><use href="#c5"/></svg><i class="da"></i></i>
    <i class="v"><svg><use href="#c6"/></svg><i class="da"></i></i>
    <i class="v"><svg><use href="#c7"/></svg></i>
    <i class="v"><svg><use href="#c8"/></svg></i>
    <i class="v"><svg><use href="#c9"/></svg><i class="da"></i></i>
    <i class="chev"></i>
  </aside>

  <section class="panel">
    <div class="ph"><i class="pbox"></i>工序导航器 - 机床</div>
    <div class="grid">
      <div class="row head"><span>名称</span><span>刀轨</span><span>刀具</span><span>描述</span><span>刀具号</span></div>
      <div class="row"><span class="nm">GENERIC_MACHINE</span><span></span><span></span><span>Generic Machine</span><span></span></div>
      <div class="row alt"><span class="nm l1"><i class="ex"></i><svg class="ti"><use href="#fold"/></svg>未用项</span><span></span><span></span><span>mill_planar</span><span></span></div>
      <div class="row"><span class="nm l2"><i class="ex"></i><svg class="ti tn"><use href="#tool"/></svg>D10X45</span><span></span><span></span><span>Chamfer Mill</span><span>0</span></div>
      <div class="row hl"><span class="nm l3"><i class="wr">!</i><svg class="ti op"><use href="#oper"/></svg><b class="lb">3D曲面精加...</b></span><span class="cc"><svg class="ok"><use href="#ck"/></svg></span><span>D10X45</span><span>CONTOUR_AREA</span><span>0</span></div>
      <div class="row"><span class="nm l1"><i class="ex"></i><svg class="ti tn"><use href="#tool"/></svg>V10</span><span></span><span></span><span>Chamfer Mill</span><span>0</span></div>
      <div class="row alt"><span class="nm l4"><i class="wr">!</i><svg class="ti op o2"><use href="#oper"/></svg>3D曲面精加工_...</span><span class="cc"><svg class="ok"><use href="#ck"/></svg></span><span>V10</span><span>CONTOUR_AREA</span><span>0</span></div>
      <div class="row fill"><span class="nm"></span><span></span><span></span><span></span><span></span></div>
      <svg class="dots"><path d="M10.500 52v62M29.500 61v12M49.500 86v12h11M29.500 130v13h14M10.500 62h5"/></svg>
      <div class="hscroll"><i class="arr">‹</i><i class="thumb"></i><i class="rest"></i><i class="arr">›</i></div>
    </div>
    <div class="split"></div>
    <div class="sec">相依性<svg class="vv" viewBox="0 0 14 14"><path d="M1 1l6 11 6-11" fill="none" stroke="#2c8fc4" stroke-width="2.200"/></svg></div>
    <div class="sec">细节<svg class="vv" viewBox="0 0 14 14"><path d="M1 1l6 11 6-11" fill="none" stroke="#2c8fc4" stroke-width="2.200"/></svg></div>
  </section>

  <aside class="rail">
    <i class="rg"><svg><use href="#gear"/></svg></i>
    <i class="t"><svg><use href="#r1"/></svg></i>
    <i class="t"><svg><use href="#r2"/></svg></i>
    <i class="t"><svg><use href="#r3"/></svg></i>
    <i class="t act"><svg><use href="#r4"/></svg></i>
    <i class="t"><svg><use href="#r5"/></svg></i>
    <i class="t"><svg><use href="#r6"/></svg></i>
    <i class="t"><svg><use href="#r7"/></svg></i>
    <i class="t m12"><svg><use href="#r8"/></svg></i>
    <i class="t m12"><svg><use href="#r9"/></svg></i>
    <i class="t m12"><svg><use href="#clock"/></svg></i>
    <i class="t"><svg><use href="#r10"/></svg></i>
    <i class="t m5"><svg><use href="#r11"/></svg></i>
    <i class="t mn5"><svg><use href="#r12"/></svg></i>
    <i class="t mn5 cur"><svg><use href="#r13"/></svg></i>
    <i class="up fd"></i><i class="up fd"></i><i class="dn"></i><i class="dn bar"></i>
    <span class="badge">31</span>
  </aside>
  <svg class="wm" viewBox="0 0 72 81">
    <path d="M36 0L0 20v41c4-22 16-38 36-43 4-6 4-12 0-18z" fill="#c8eafc" opacity=".9"/>
    <path d="M36 0l36 20v41c-2-18-10-34-24-42C46 12 42 5 36 0z" fill="#9bdaf9" opacity=".9"/>
    <path d="M0 61l36 20 36-20c-10 8-22 10-34 4C26 58 12 52 0 61z" fill="#88d5fa" opacity=".9"/>
    <path d="M0 61V40c8-14 16-18 24-20l-8 24 4 16z" fill="#b7e3fb" opacity=".8"/>
    <path d="M72 61c-10 6-20 6-30 2l12-6 2-22 16 4z" fill="#8dd6f9" opacity=".9"/>
    <path d="M36 29l12 7v13l-12 7-12-7V36z" fill="#a9def9"/>
    <path d="M36 42l12-6v13l-12 7z" fill="#7ecbf2"/>
    <path d="M24 36l12 6 12-6" fill="none" stroke="#fff" opacity=".6"/>
    <path d="M36 42v14" stroke="#fff" opacity=".6"/>
  </svg>
</main>

<footer class="status"><span class="st">全部 1</span><svg class="sico" viewBox="0 0 14 16"><path d="M0 3V0h3M11 0h3v3M14 13v3h-3M3 16H0v-3" fill="none" stroke="#888"/><rect x="3" y="2" width="8" height="11" fill="#dde" stroke="#556"/><rect x="4" y="6" width="6" height="6" fill="#4a80c8"/></svg></footer>
<div class="task"><i class="tk t1"></i><i class="tk t2"></i></div>
</body></html>
```
FILE: styles.css
```css
*{box-sizing:border-box}
html,body{margin:0;height:1039px;overflow:hidden;background:#fff}
body{display:flex;flex-direction:column;font-family:"Noto Sans","Noto Sans CJK SC",sans-serif;color:#222;font-size:14px}
i{font-style:normal}
.defs{position:absolute;width:0;height:0}
.title{height:30px;flex:none;display:flex;align-items:center;position:relative;background:#fff}
.nx{width:46px;padding-left:3px;font:bold 26px/26px "Liberation Sans",sans-serif;color:#8d9aa8;border-right:1px solid #ddd;height:26px}
.ttxt{margin-left:5px;font-size:15.500px;color:#222;white-space:pre}
.siemens{position:absolute;left:1739px;top:5px;font:bold 16px/20px "Noto Sans",sans-serif;color:#009999;letter-spacing:-.2px}
.win{position:absolute;left:1838px;top:3px;width:78px;height:24px;display:flex;align-items:center;gap:14px;color:#333}
.wmin{width:9px;height:2px;background:#555;margin-top:11px}
.wmax{width:11px;height:10px;border:1px solid #444;position:relative;margin-left:5px;background:#fff;box-shadow:2px -2px 0 -1px #fff,3px -3px 0 -1px #444}
.wx{font-size:16px;margin-left:3px;line-height:20px}
.win2{left:1852px;top:3px;width:66px;gap:10px;z-index:1}
.win2 .wmax{background:#c7d6d4;box-shadow:2px -2px 0 -1px #c7d6d4,3px -3px 0 -1px #444}
.win2 .wx{font-weight:bold}
.tshadow{position:absolute;left:1566px;right:0;top:0;height:3px;background:linear-gradient(#b9b9b9,#f4f4f4)}
.menu{height:31px;flex:none;background:#c7d6d4;display:flex;align-items:center;gap:14.700px;position:relative;font-size:14px;color:#222}
.micon{width:22px;height:24px;margin:0 -9px 0 7px;flex:none}
.menu span{white-space:nowrap}
.menu .mg{margin-left:7px}
.menu .ms{margin-left:-1px}
.menu .ms2{margin-left:-3px}
.tb{display:flex;align-items:center;flex:none;background:#fff}
.r1{height:41px;background:linear-gradient(#ccc,#ccc) 0 100%/1907px 2px no-repeat #fff}
.r2{height:42px;background:linear-gradient(#ccc,#ccc) 0 100%/595px 2px no-repeat #fff}
.r3{height:36px;padding-left:5px;position:relative}
.grip{width:5px;margin-left:2px;height:34px;flex:none;background:radial-gradient(circle,#999 40%,transparent 50%) 0 0/3px 3px repeat-y}
.i{width:39px;height:36px;flex:none;display:flex;align-items:center;justify-content:center}
.i svg{width:32px;height:32px}
.ov{margin-left:-3px}
.w2{margin-left:2px}
.a{width:11px;height:36px;flex:none;position:relative}
.a::after,.da{content:"";width:0;height:0;border:3.500px solid transparent;border-top:4px solid #111;border-bottom:0}
.a::after{position:absolute;left:2px;top:17px}
.an{width:9px}
.al{width:19px}
.al::after{left:6px;top:23px}
.am{width:13px}
.al2::after{top:24px}
.aw{width:19px}
.aw::after{left:7px}
.sep{width:1px;height:32px;background:#ccc;margin:0 3px;flex:none}
.sw{margin-right:5px}
.sep0{width:1px;height:32px;background:#ccc;margin-right:1px;flex:none}
.gsep{width:1px;height:41px;background:#ccc;flex:none;margin-right:-1px}
.gsep0{width:1px;height:41px;background:#ccc;margin-left:3px;flex:none;margin-right:-1px}
.qd{font-size:14px;width:29px;margin-left:1px;flex:none}
.search{width:157px;height:24px;border:1px solid #aaa;margin-left:3px;display:flex;align-items:center;justify-content:space-between;padding:0 3px;flex:none;font-size:14px;line-height:20px}
.mag{width:17px;height:17px}
.combo{height:24px;border:1px solid #aaa;display:flex;align-items:center;justify-content:space-between;padding:0 10px 0 3px;flex:none;font-size:14px;color:#222}
.cn{width:60px;margin-left:7px;font-size:15px}
.r3 .combo{height:23px}
.c1{width:166px}
.c2{width:175px;margin-left:9px}
.j{width:30px;height:30px;flex:none;display:flex;align-items:center;justify-content:center}
.j svg{width:26px;height:26px}
.fade{opacity:.3;margin-left:4px}
.r3 .sep{height:28px;margin:0 2px}
.r3 .sep.s4{margin:0 3px}
.red{width:22px!important;height:22px!important}
.corner{position:absolute;left:1907px;top:24px;width:0;height:0;border:3.500px solid transparent;border-top:4px solid #111;border-bottom:0}
.work{flex:none;height:827px;display:flex;border-top:1px solid #888;position:relative}
.view{width:1175px;height:826px;flex:none;background:#24252a;position:relative;overflow:hidden}
.scene{display:block;width:1175px;height:826px}
.scn-ym{font-size:14px;fill:#3d9a3d}
.scn-z{font-size:14px;fill:#3344dd}
.scn-zm{font-size:14px;fill:#5566dd}
.scn-xm{font-size:14px;fill:#e3dab0}
.scn-x{font-size:14px;fill:#dedede}
.scn-ty{font-size:12px;fill:#2b9a2b}
.scn-tz{font-size:12px;fill:#1636c8}
.scn-tx{font-size:13px;fill:#cc3333}
.svi{font:bold 17px "Liberation Serif",serif;fill:#2f3b8e}
.svj{font:bold 18px "Liberation Serif",serif;fill:#fff}
.popup{position:absolute;left:576px;top:398px;width:239px;height:86px;background:rgba(255,255,255,.9);border-radius:3px;padding-top:6px;box-shadow:0 0 3px rgba(0,0,0,.15)}
.pi{height:36px;display:flex;align-items:center;padding-left:52px;font-size:15px;color:#222;position:relative;white-space:pre}
.pw{word-spacing:2px}
.pi.on{background:rgba(210,210,210,.4)}
.chk{position:absolute;left:20px;top:10px;width:19px;height:17px}
.strip{width:55px;flex:none;height:826px;border-right:1px solid #aaa;display:flex;flex-direction:column;background:#fff}
.vgrip{height:7px;flex:none;background:radial-gradient(circle,#999 40%,transparent 50%) 0 2px/3px 3px repeat-x;margin:0 4px}
.g2{height:9px;background-position:0 3px}
.v{height:39px;flex:none;display:flex;align-items:center;padding-left:6px;gap:4px}
.v svg{width:32px;height:32px}
.v.t{padding-left:10px}
.v.sel{margin-left:8px;width:38px;padding-left:2px;background:#c7d6d4;border:1px solid #9fb8b5}
.da{display:block;flex:none}
.combo .da,.v .da{border-top:5px solid #111;border-left-width:4px;border-right-width:4px}
.chev{height:12px;flex:none;position:relative;margin-bottom:2px;box-shadow:0 2px 0 -1px #ccc}
.chev::after{content:"";position:absolute;left:7px;top:3px;border:4px solid transparent;border-right:4px solid #222;border-left:0}
.panel{width:650px;flex:none;height:826px;padding:0 6px 0 9px;display:flex;flex-direction:column;background:#fff}
.ph{height:31px;flex:none;display:flex;align-items:center;font-size:14.500px;padding-left:5px;color:#222}
.pbox{width:13px;height:12px;border:1.500px solid #222;margin-right:11px;background:#fff}
.grid{height:726px;flex:none;border:1px solid #ddd;position:relative;display:flex;flex-direction:column;overflow:hidden}
.row{display:grid;grid-template-columns:200px 101px 100px 150px 82px;height:24px;flex:none;font-size:15.200px;line-height:24px}
.row>span{border-right:1px solid #eaeaea;border-bottom:1px solid #e8e8e8;padding-left:4px;white-space:nowrap;overflow:hidden;display:block}
.row>span.nm{border-right:1px solid #000;display:flex;align-items:center}
.alt{background:#f9f9f9}
.head{background:#f2f2f2;color:#333;font-size:14.500px}
.head>span{padding-left:6px;border-right:1px solid #ddd}
.row.head>span:first-child{border-right:1px solid #ddd}
.l1{padding-left:6px!important}
.l2{padding-left:25px!important}
.l3{padding-left:62px!important}
.l4{padding-left:43px!important}
.ex{width:9px;height:9px;border:1px solid #ccc;flex:none;margin-right:5px;background:linear-gradient(#222,#222) 50% 50%/5px 1px no-repeat #fff}
.ti{width:14px;height:15px;flex:none;margin-right:4px}
.tn{width:8px;height:16px;margin-right:8px;margin-left:1px}
.wr{width:8px;flex:none;font:bold 21px/24px "Liberation Sans",sans-serif;color:#f2cc00;margin-right:2px;text-shadow:0 0 1px #a08000}
.op{margin:0 1px 0 2px;width:13px}
.o2{margin-right:5px}
.lb{flex:1;font-weight:normal;background:#3399ff;color:#fff;padding-left:4px;height:24px;margin-right:-1px}
.hl{color:#fff}
.hl>span:not(.nm){background:#3399ff;color:#fff;border-color:#fff}
.cc{display:flex!important;align-items:center}
.ok{width:15px;height:15px;margin-left:2px}
.fill{flex:1;height:auto;background:repeating-linear-gradient(#f9f9f9 0 23px,#e8e8e8 23px 24px,#fff 24px 47px,#e8e8e8 47px 48px)}
.fill>span{border-bottom:0}
.dots{position:absolute;left:0;top:0;width:120px;height:200px;pointer-events:none}
.dots path{fill:none;stroke:#888;stroke-dasharray:1 2}
.hscroll{height:20px;flex:none;background:#f0f0f0;display:flex;align-items:center;margin:0 1px}
.arr{width:20px;text-align:center;font:bold 18px/18px "Liberation Sans",sans-serif;color:#555;flex:none}
.thumb{width:391px;height:19px;background:#cacaca;flex:none}
.rest{flex:1}
.split{height:5px;flex:none;margin-top:2px;background:#ddd;border:1px solid #999}
.sec{height:28px;flex:none;border-bottom:3px solid #ccc;font-size:17.500px;line-height:26px;color:#3c9bd2;padding-left:7px;position:relative;display:flex;align-items:center}
.vv{position:absolute;left:615px;top:5px;width:14px;height:14px}
.rail{width:40px;flex:none;height:826px;background:#d4d4d4;display:flex;flex-direction:column;align-items:flex-start;position:relative;overflow:hidden;border-left:1px solid #aaa}
.rail i{display:flex;align-items:center;justify-content:center;flex:none}
.rg{height:26px;width:36px;margin-bottom:18px}
.rg svg{width:16px;height:16px}
.rail .t{height:50px;width:37px}
.rail .t svg{width:32px;height:32px}
.rail .act{background:#fff;border-top:1px solid #bbb;border-bottom:1px solid #bbb}
.m12{margin-top:11px}
.m5{margin-top:5px}
.mn5{margin-top:-5px}
.rail .cur{height:37px;margin-top:-1px}
.up,.dn{height:16px;width:36px;position:relative}
.up::after{content:"";border:4px solid transparent;border-bottom:5px solid #111;border-top:0}
.dn::after{content:"";border:4px solid transparent;border-top:5px solid #111;border-bottom:0}
.fd{opacity:.25}
.bar::before{content:"";position:absolute;left:14px;top:2px;width:8px;height:1px;background:#111}
.badge{position:absolute;left:18px;top:641px;width:58px;height:58px;border-radius:50%;background:#37b866;border:3px solid #e8e8e8;color:#fff;font:bold 13px/52px "Liberation Sans",sans-serif;padding-left:2px;box-shadow:0 0 4px rgba(0,0,0,.4)}
.wm{position:absolute;left:1637px;top:764px;width:72px;height:81px;pointer-events:none;z-index:2}
.status{height:23px;flex:none;background:#fff;border-top:1px solid #aaa;display:flex;align-items:center;font-weight:bold;font-size:13.500px}
.st{margin-left:916px}
.sico{width:14px;height:16px;margin-left:898px}
.task{height:9px;flex:none;background:#040c13;display:flex}
.tk{height:9px;background:#2a2e33;flex:none}
.t1{margin-left:180px;width:65px}
.t2{margin-left:257px;width:58px}
```
